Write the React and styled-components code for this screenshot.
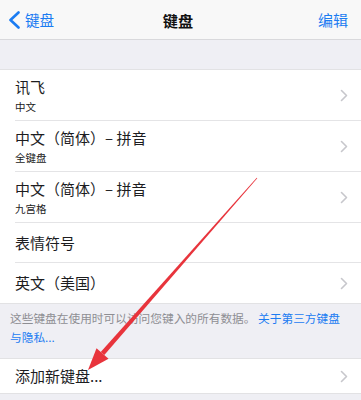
import React from "react";
import styled, { createGlobalStyle } from "styled-components";

const Global = createGlobalStyle`
  html, body { margin: 0; padding: 0; background: #efeff4; }
  body { font-family: "Noto Sans CJK SC", "Noto Sans", sans-serif; -webkit-font-smoothing: antialiased; }
`;

const Page = styled.div`
  position: relative;
  width: 361px;
  height: 400px;
  overflow: hidden;
  background: #efeff4;
`;

const NavBar = styled.div`
  height: 39px;
  background: #f8f8f8;
  border-bottom: 1px solid #d9d9dc;
  display: grid;
  grid-template-columns: 1fr auto 1fr;
  align-items: center;
  padding: 0 13px 0 8px;
`;

const BackButton = styled.div`
  display: flex;
  align-items: center;
  gap: 4px;
  color: #1b7cf2;
  font-size: 14.6px;
  line-height: 20px;
`;

const NavTitle = styled.div`
  font-size: 15.2px;
  font-weight: 600;
  color: #111;
  line-height: 20px;
`;

const NavAction = styled.div`
  justify-self: end;
  color: #1b7cf2;
  font-size: 15px;
  line-height: 20px;
`;

const Group = styled.div`
  background: #fff;
  border-top: 1px solid #e2e2e4;
  border-bottom: 1px solid #e2e2e4;
  margin-top: ${(p) => p.$top}px;
`;

const Row = styled.div`
  display: flex;
  align-items: center;
  height: ${(p) => p.$h}px;
  padding-left: 15px;
  position: relative;
  &:not(:last-child)::after {
    content: "";
    position: absolute;
    left: 15px;
    right: 0;
    bottom: 0;
    height: 1px;
    background: #e4e4e6;
  }
`;

const RowText = styled.div`
  flex: 1;
  display: flex;
  flex-direction: column;
`;

const Title = styled.div`
  font-size: 15px;
  line-height: 20px;
  color: #1d1d1f;
  white-space: nowrap;
`;

const Subtitle = styled.div`
  font-size: 10.5px;
  line-height: 16px;
  margin-top: 2px;
  color: #222;
`;

const ChevronWrap = styled.div`
  width: 8px;
  display: flex;
  margin-right: 13px;
`;

const Footer = styled.div`
  padding: 4px 12px 0 10px;
  height: 54px;
  box-sizing: border-box;
  font-size: 11.7px;
  line-height: 19px;
  color: #8e8e93;
`;

const Link = styled.span`
  color: #1b7cf2;
`;

const Overlay = styled.svg`
  position: absolute;
  left: 0;
  top: 0;
  pointer-events: none;
`;

const Chevron = () => (
  <svg width="8" height="13" viewBox="0 0 8 13">
    <polyline points="1.5,1.5 6.5,6.5 1.5,11.5" fill="none" stroke="#c7c7cc" strokeWidth="1.6" strokeLinecap="round" strokeLinejoin="round" />
  </svg>
);

const BackChevron = () => (
  <svg width="13" height="18" viewBox="0 0 13 18">
    <polyline points="10.5,1.5 2.5,9 10.5,16.5" fill="none" stroke="#1b7cf2" strokeWidth="2.6" strokeLinecap="round" strokeLinejoin="round" />
  </svg>
);

function Arrow() {
  const s = [257, 178];
  const t = [88, 370];
  const dx = t[0] - s[0];
  const dy = t[1] - s[1];
  const len = Math.hypot(dx, dy);
  const u = [dx / len, dy / len];
  const n = [u[1], -u[0]];
  const headLen = 22;
  const base = [t[0] - u[0] * headLen, t[1] - u[1] * headLen];
  const p = (pt, k) => `${pt[0] + n[0] * k},${pt[1] + n[1] * k}`;
  const shaft = [p(s, 0.35), p(base, 2.4), p(base, -2.4), p(s, -0.35)].join(" ");
  const head = [p(base, 8), `${t[0]},${t[1]}`, p(base, -8)].join(" ");
  return (
    <Overlay width="361" height="400" viewBox="0 0 361 400">
      <polygon points={shaft} fill="#e8343c" />
      <polygon points={head} fill="#e8343c" />
    </Overlay>
  );
}

const items = [
  { title: "讯飞", sub: "中文", chevron: true },
  { title: "中文（简体）– 拼音", sub: "全键盘", chevron: true },
  { title: "中文（简体）– 拼音", sub: "九宫格", chevron: true },
  { title: "表情符号", chevron: false },
  { title: "英文（美国）", chevron: true },
];

export default function App() {
  return (
    <Page>
      <Global />
      <NavBar>
        <BackButton>
          <BackChevron />
          键盘
        </BackButton>
        <NavTitle>键盘</NavTitle>
        <NavAction>编辑</NavAction>
      </NavBar>
      <Group $top={29}>
        {items.map((it, i) => (
          <Row key={i} $h={it.sub ? 51 : 40}>
            <RowText>
              <Title>{it.title}</Title>
              {it.sub && <Subtitle>{it.sub}</Subtitle>}
            </RowText>
            <ChevronWrap>{it.chevron && <Chevron />}</ChevronWrap>
          </Row>
        ))}
      </Group>
      <Footer>
        这些键盘在使用时可以访问您键入的所有数据。 <Link>关于第三方键盘与隐私...</Link>
      </Footer>
      <Group $top={0}>
        <Row $h={34}>
          <RowText>
            <Title>添加新键盘...</Title>
          </RowText>
          <ChevronWrap>
            <Chevron />
          </ChevronWrap>
        </Row>
      </Group>
      <Arrow />
    </Page>
  );
}
